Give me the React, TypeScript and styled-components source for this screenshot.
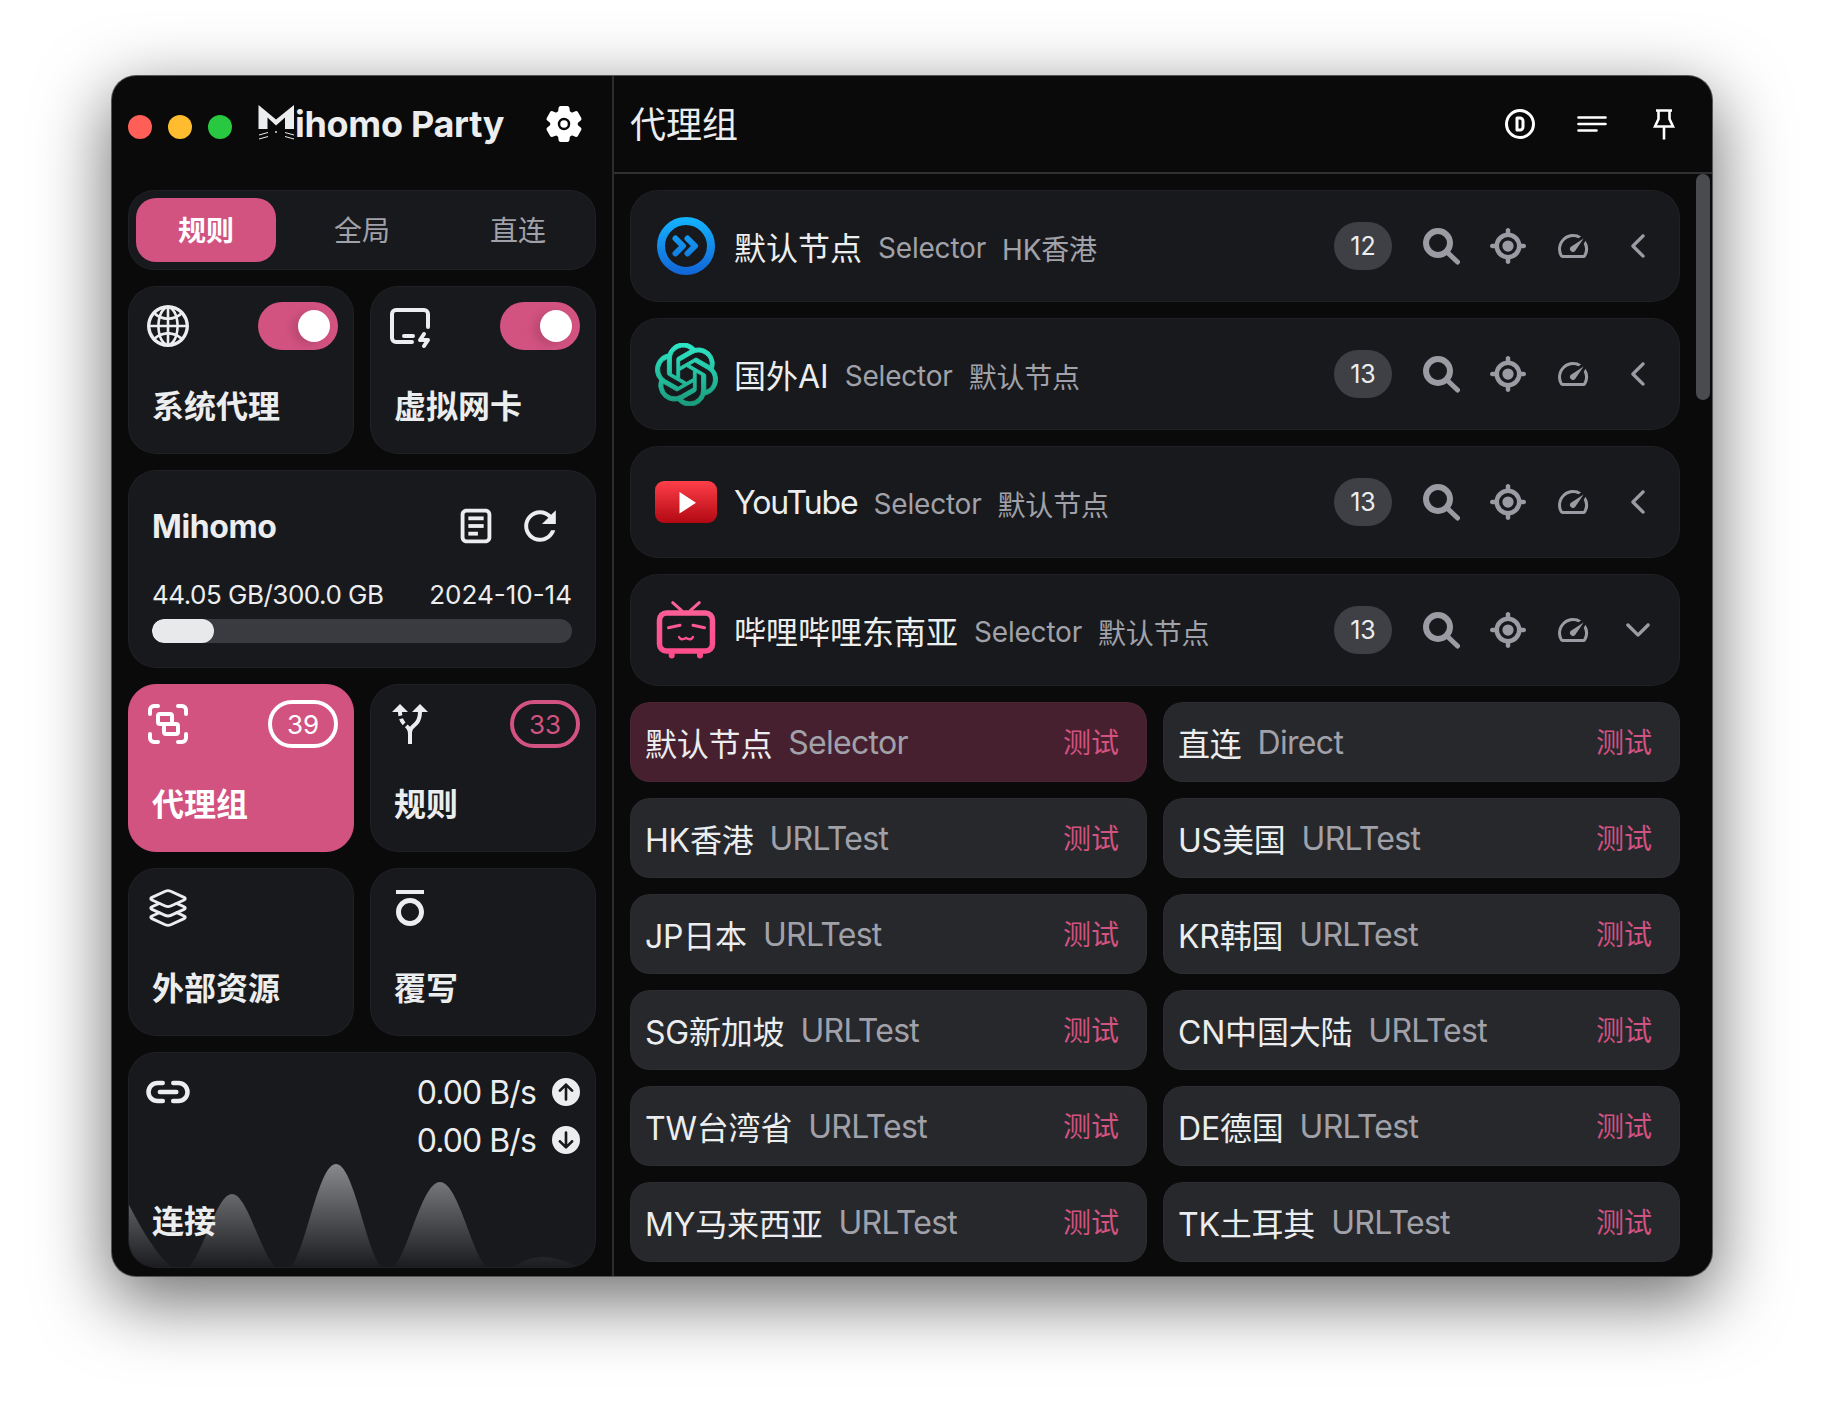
import styled, { createGlobalStyle } from 'styled-components';
import { ReactNode } from 'react';
import { IoSettings, IoLink, IoLayersOutline } from 'react-icons/io5';
import { IoMdRefresh, IoIosArrowBack, IoIosArrowDown } from 'react-icons/io';
import { AiOutlineGlobal } from 'react-icons/ai';
import { TbDeviceIpadHorizontalBolt, TbCircleLetterD } from 'react-icons/tb';
import { CgLoadbarDoc } from 'react-icons/cg';
import { LuGroup } from 'react-icons/lu';
import { MdOutlineAltRoute, MdFormatOverline, MdOutlineSpeed } from 'react-icons/md';
import { FaCircleArrowUp, FaCircleArrowDown, FaLocationCrosshairs } from 'react-icons/fa6';
import { SiOpenai } from 'react-icons/si';

const pink = '#d25280';
const text = '#ecedee';
const muted = '#a1a1aa';
const cardBg = '#18191c';

const GlobalStyle = createGlobalStyle`
	html, body {
		margin: 0;
		background: #fff;
	}
	* {
		box-sizing: border-box;
	}
	body {
		font-family: Inter, 'Noto Sans CJK SC', sans-serif;
		color: ${text};
	}
`;

const Page = styled.div`
	width: 1824px;
	height: 1424px;
	padding: 76px 112px 148px;
	overflow: hidden;
`;

const Window = styled.div`
	width: 1600px;
	height: 1200px;
	display: flex;
	background: #0a0a0b;
	border-radius: 24px;
	overflow: hidden;
	box-shadow: 0 0 0 1px #55565a, 0 22px 70px 4px rgba(0, 0, 0, 0.56);
`;

const Sidebar = styled.aside`
	width: 502px;
	flex-shrink: 0;
	border-right: 2px solid #2b2c2e;
`;

const SideHeader = styled.div`
	height: 98px;
	padding: 0 16px;
	display: flex;
	align-items: center;
`;

const Lights = styled.div`
	display: flex;
	gap: 16px;
	margin-top: 4px;
`;

const Light = styled.span<{ $color: string }>`
	width: 24px;
	height: 24px;
	border-radius: 50%;
	background: ${(p) => p.$color};
`;

const Brand = styled.div`
	display: flex;
	align-items: flex-start;
	margin-left: 26px;
	flex-grow: 1;
`;

const BrandName = styled.span`
	font-size: 36px;
	font-weight: 700;
	line-height: 44px;
	letter-spacing: -0.3px;
	margin-top: -2px;
`;

const GearButton = styled.span`
	width: 64px;
	margin-top: -2px;
	display: flex;
	justify-content: center;
	color: #fff;
`;

const SideBody = styled.div`
	padding: 16px 16px 0;
	display: grid;
	grid-template-columns: 226px 226px;
	gap: 16px;
`;

const Card = styled.div`
	background: ${cardBg};
	border: 1px solid rgba(255, 255, 255, 0.035);
	border-radius: 28px;
`;

const Tabs = styled(Card)`
	grid-column: 1 / 3;
	height: 80px;
	padding: 7px;
	display: flex;
	gap: 16px;
	border-radius: 26px;
`;

const Tab = styled.div<{ $active?: boolean }>`
	width: 140px;
	height: 64px;
	padding-bottom: 2px;
	border-radius: 20px;
	display: flex;
	align-items: center;
	justify-content: center;
	font-size: 28px;
	font-weight: ${(p) => (p.$active ? 700 : 400)};
	color: ${(p) => (p.$active ? '#fff' : muted)};
	background: ${(p) => (p.$active ? pink : 'transparent')};
`;

const NavCard = styled(Card)<{ $active?: boolean }>`
	height: 168px;
	display: flex;
	flex-direction: column;
	justify-content: space-between;
	padding: 15px 15px 22px 0;
	background: ${(p) => (p.$active ? pink : cardBg)};
	color: ${(p) => (p.$active ? '#fff' : text)};
	border-color: ${(p) => (p.$active ? pink : 'rgba(255, 255, 255, 0.035)')};
`;

const NavTop = styled.div`
	display: flex;
	align-items: center;
	justify-content: space-between;
	height: 48px;
`;

const NavIcon = styled.span`
	width: 48px;
	height: 48px;
	margin-left: 15px;
	display: flex;
	align-items: center;
	justify-content: center;
`;

const NavLabel = styled.div`
	font-size: 32px;
	font-weight: 700;
	line-height: 48px;
	padding-left: 23px;
`;

const Toggle = styled.span`
	width: 80px;
	height: 48px;
	border-radius: 24px;
	background: ${pink};
	padding: 8px;
	display: flex;
	justify-content: flex-end;
`;

const Knob = styled.span`
	width: 32px;
	height: 32px;
	border-radius: 50%;
	background: #fff;
	box-shadow: -6px 3px 10px rgba(0, 0, 0, 0.12);
`;

const CountBadge = styled.span<{ $active?: boolean }>`
	width: 70px;
	height: 48px;
	border-radius: 24px;
	border: 4px solid ${(p) => (p.$active ? '#fff' : pink)};
	color: ${(p) => (p.$active ? '#fff' : pink)};
	font-size: 26px;
	display: flex;
	align-items: center;
	justify-content: center;
`;

const CoreCard = styled(Card)`
	grid-column: 1 / 3;
	height: 198px;
	padding: 0 23px;
`;

const CoreTop = styled.div`
	height: 112px;
	display: flex;
	align-items: center;
	padding-bottom: 2px;
`;

const CoreTitle = styled.div`
	font-size: 32px;
	font-weight: 700;
	letter-spacing: -0.4px;
	flex-grow: 1;
`;

const CoreButton = styled.span`
	width: 64px;
	display: flex;
	justify-content: center;
`;

const CoreInfo = styled.div`
	display: flex;
	justify-content: space-between;
	font-size: 26px;
	line-height: 32px;
	margin-top: -4px;
`;

const CoreUsage = styled.span`
	letter-spacing: -0.5px;
`;

const Track = styled.div`
	height: 24px;
	margin-top: 8px;
	background: #3a3b40;
	border-radius: 12px;
	overflow: hidden;
`;

const TrackFill = styled.div`
	height: 100%;
	background: #e8e9eb;
	border-radius: 12px;
`;

const ConnCard = styled(Card)`
	grid-column: 1 / 3;
	height: 216px;
	position: relative;
	overflow: hidden;
	padding: 15px 15px 0 0;
`;

const ConnTop = styled.div`
	display: flex;
	justify-content: space-between;
	position: relative;
`;

const Speeds = styled.div`
	display: flex;
	flex-direction: column;
`;

const SpeedRow = styled.div`
	display: flex;
	align-items: center;
	justify-content: flex-end;
	gap: 16px;
	height: 48px;
	font-size: 32px;
	letter-spacing: -0.9px;
`;

const ConnChart = styled.svg`
	position: absolute;
	left: -1px;
	bottom: -1px;
`;

const ConnLabel = styled(NavLabel)`
	position: absolute;
	bottom: 21px;
	left: 0;
`;

const Main = styled.main`
	flex-grow: 1;
	min-width: 0;
	position: relative;
`;

const MainHeader = styled.header`
	height: 98px;
	padding: 0 16px;
	display: flex;
	align-items: center;
	border-bottom: 2px solid #2f3032;
`;

const MainTitle = styled.h1`
	margin: -4px 0 0;
	flex-grow: 1;
	font-size: 36px;
	font-weight: 400;
`;

const HeaderButtons = styled.div`
	display: flex;
	align-items: center;
	margin-right: -4px;
`;

const HeaderButton = styled.span`
	width: 72px;
	display: flex;
	align-items: center;
	justify-content: center;
	color: #fff;
`;

const Content = styled.div`
	padding: 16px 32px 0 16px;
	display: flex;
	flex-direction: column;
	gap: 16px;
`;

const GroupCard = styled(Card)`
	height: 112px;
	padding: 0 9px 0 23px;
	display: flex;
	align-items: center;
`;

const GroupIcon = styled.span`
	width: 64px;
	height: 64px;
	margin-right: 16px;
	display: flex;
	align-items: center;
	justify-content: center;
	flex-shrink: 0;
`;

const GroupName = styled.span<{ $tight?: boolean }>`
	font-size: 32px;
	letter-spacing: ${(p) => (p.$tight ? '-1.1px' : '0')};
`;

const Sub = styled.span`
	font-size: 28px;
	letter-spacing: -0.2px;
	color: ${muted};
	margin-left: 16px;
	padding-top: 3px;
`;

const CountPill = styled.span`
	margin-left: auto;
	width: 58px;
	height: 48px;
	border-radius: 24px;
	background: #3f4046;
	color: ${text};
	font-size: 25px;
	display: flex;
	align-items: center;
	justify-content: center;
	margin-right: 18px;
`;

const GroupButton = styled.span`
	width: 65px;
	display: flex;
	justify-content: center;
	color: #9a9ba3;
`;

const OpenAiIcon = styled(SiOpenai)`
	fill: url(#openaiFill);
	stroke: url(#openaiFill);
	stroke-width: 0.35px;
`;

const ProxyGrid = styled.div`
	display: grid;
	grid-template-columns: 1fr 1fr;
	gap: 16px;
`;

const ProxyItem = styled.div<{ $selected?: boolean }>`
	height: 80px;
	padding: 0 27px 0 14px;
	border-radius: 20px;
	display: flex;
	align-items: center;
	background: ${(p) => (p.$selected ? '#47202f' : '#27282c')};
	border: 1px solid rgba(255, 255, 255, 0.025);
	white-space: nowrap;
`;

const ProxyName = styled.span`
	font-size: 32px;
	letter-spacing: -0.2px;
`;

const ProxyType = styled.span`
	font-size: 32px;
	letter-spacing: -0.7px;
	color: ${muted};
	margin-left: 16px;
`;

const TestLink = styled.span`
	margin-left: auto;
	font-size: 28px;
	color: ${pink};
	padding-bottom: 3px;
`;

const ScrollThumb = styled.div`
	position: absolute;
	top: 98px;
	right: 2px;
	width: 14px;
	height: 226px;
	border-radius: 7px;
	background: #4a4b4e;
`;

const SearchIcon = () => (
	<svg width='37' height='37' viewBox='0 0 37 37' fill='none' stroke='currentColor' style={{ marginRight: 3 }}>
		<circle cx='15' cy='15' r='12' strokeWidth='6' />
		<path d='M24 24l10.5 10' strokeWidth='5' strokeLinecap='round' />
	</svg>
);

const SortLines = () => (
	<svg width='30' height='18' viewBox='0 0 30 18' stroke='#fff' strokeWidth='2.6' strokeLinecap='round'>
		<path d='M1.5 2.5h27M1.5 9h27M1.5 15.5h18' />
	</svg>
);

const PinIcon = () => (
	<svg width='22' height='31' viewBox='0 0 22 31' fill='none' stroke='#fff' strokeWidth='2.6'>
		<path d='M3 1.5h16M5.5 1.5v8.5L2 17.5h18l-3.5-7.5V1.5M11 17.5V30.5' />
	</svg>
);

const CatMark = () => (
	<svg width='37' height='37' viewBox='0 0 37 37' fill='none'>
		<path d='M0.5 1L18 15.5L36 1V25H27V13.5L18 21.5L9.5 13.5V25H0.5Z' fill={text} />
		<path d='M1 31l9-2.5M1 35l9-2.5M36 31l-9-2.5M36 35l-9-2.5' stroke={text} strokeWidth='1' />
		<circle cx='18' cy='28' r='0.9' fill={text} />
	</svg>
);

const DefaultIcon = () => (
	<svg width='64' height='64' viewBox='0 0 64 64' fill='none'>
		<defs>
			<linearGradient id='blueFill' gradientUnits='userSpaceOnUse' x1='0' y1='3' x2='0' y2='61'>
				<stop offset='0' stopColor='#14b4ff' />
				<stop offset='1' stopColor='#1164d6' />
			</linearGradient>
		</defs>
		<circle cx='32' cy='32' r='25' stroke='url(#blueFill)' strokeWidth='8' />
		<path d='M21.5 24.5l7.5 7.5-7.5 7.5M33.5 24.5l7.5 7.5-7.5 7.5' stroke='url(#blueFill)' strokeWidth='6' strokeLinecap='round' strokeLinejoin='round' />
	</svg>
);

const YouTubeIcon = () => (
	<svg width='64' height='64' viewBox='0 0 64 64'>
		<defs>
			<linearGradient id='ytFill' x1='0' y1='0' x2='0' y2='1'>
				<stop offset='0' stopColor='#ff3f49' />
				<stop offset='1' stopColor='#b20812' />
			</linearGradient>
		</defs>
		<rect x='1' y='11' width='62' height='42' rx='9' fill='url(#ytFill)' />
		<path d='M25.5 22l16.5 10.8-16.5 10.8z' fill='#fff' />
	</svg>
);

const BilibiliIcon = () => (
	<svg width='64' height='64' viewBox='0 0 64 64' fill='none'>
		<defs>
			<linearGradient id='biliFill' gradientUnits='userSpaceOnUse' x1='0' y1='4' x2='0' y2='60'>
				<stop offset='0' stopColor='#fb6297' />
				<stop offset='1' stopColor='#ff4a8a' />
			</linearGradient>
		</defs>
		<g stroke='url(#biliFill)' strokeLinecap='round'>
			<rect x='5.5' y='15' width='53' height='38' rx='7' strokeWidth='5.5' />
			<path d='M18.7 4.7l9 8M45.3 4.7l-9 8' strokeWidth='3' />
			<path d='M14.5 29.7l11.5-2.4M50.5 29.7l-11.5-2.4' strokeWidth='3' />
			<path d='M25 39q2 4 7 1q5 3 7-1' strokeWidth='2.4' />
			<path d='M17.7 56v1.5M46 56v1.5' strokeWidth='6' />
		</g>
	</svg>
);

const groups: { icon: ReactNode; name: string; now: string; count: number; open?: boolean; tight?: boolean }[] = [
	{ icon: <DefaultIcon />, name: '默认节点', now: 'HK香港', count: 12 },
	{ icon: <OpenAiIcon size={63} />, name: '国外AI', now: '默认节点', count: 13 },
	{ icon: <YouTubeIcon />, name: 'YouTube', now: '默认节点', count: 13, tight: true },
	{ icon: <BilibiliIcon />, name: '哔哩哔哩东南亚', now: '默认节点', count: 13, open: true },
];

const proxies = [
	['默认节点', 'Selector'],
	['直连', 'Direct'],
	['HK香港', 'URLTest'],
	['US美国', 'URLTest'],
	['JP日本', 'URLTest'],
	['KR韩国', 'URLTest'],
	['SG新加坡', 'URLTest'],
	['CN中国大陆', 'URLTest'],
	['TW台湾省', 'URLTest'],
	['DE德国', 'URLTest'],
	['MY马来西亚', 'URLTest'],
	['TK土耳其', 'URLTest'],
];

const App = () => {
	const used = 44.05;
	const total = 300;

	return (
		<Page>
			<GlobalStyle />
			<Window>
				<Sidebar>
					<SideHeader>
						<Lights>
							<Light $color='#ff5f57' />
							<Light $color='#febc2e' />
							<Light $color='#28c840' />
						</Lights>
						<Brand>
							<CatMark />
							<BrandName>ihomo Party</BrandName>
						</Brand>
						<GearButton>
							<IoSettings size={40} />
						</GearButton>
					</SideHeader>
					<SideBody>
						<Tabs>
							<Tab $active>规则</Tab>
							<Tab>全局</Tab>
							<Tab>直连</Tab>
						</Tabs>
						<NavCard>
							<NavTop>
								<NavIcon><AiOutlineGlobal size={48} /></NavIcon>
								<Toggle><Knob /></Toggle>
							</NavTop>
							<NavLabel>系统代理</NavLabel>
						</NavCard>
						<NavCard>
							<NavTop>
								<NavIcon><TbDeviceIpadHorizontalBolt size={48} /></NavIcon>
								<Toggle><Knob /></Toggle>
							</NavTop>
							<NavLabel>虚拟网卡</NavLabel>
						</NavCard>
						<CoreCard>
							<CoreTop>
								<CoreTitle>Mihomo</CoreTitle>
								<CoreButton><CgLoadbarDoc size={46} /></CoreButton>
								<CoreButton><IoMdRefresh size={46} /></CoreButton>
							</CoreTop>
							<CoreInfo>
								<CoreUsage>44.05 GB/300.0 GB</CoreUsage>
								<span>2024-10-14</span>
							</CoreInfo>
							<Track>
								<TrackFill style={{ width: `${(used / total) * 100}%` }} />
							</Track>
						</CoreCard>
						<NavCard $active>
							<NavTop>
								<NavIcon><LuGroup size={48} /></NavIcon>
								<CountBadge $active>39</CountBadge>
							</NavTop>
							<NavLabel>代理组</NavLabel>
						</NavCard>
						<NavCard>
							<NavTop>
								<NavIcon><MdOutlineAltRoute size={48} /></NavIcon>
								<CountBadge>33</CountBadge>
							</NavTop>
							<NavLabel>规则</NavLabel>
						</NavCard>
						<NavCard>
							<NavTop>
								<NavIcon><IoLayersOutline size={46} /></NavIcon>
							</NavTop>
							<NavLabel>外部资源</NavLabel>
						</NavCard>
						<NavCard>
							<NavTop>
								<NavIcon><MdFormatOverline size={48} /></NavIcon>
							</NavTop>
							<NavLabel>覆写</NavLabel>
						</NavCard>
						<ConnCard>
							<ConnChart width='468' height='216' viewBox='0 0 468 216'>
								<defs>
									<linearGradient id='connFill' gradientUnits='userSpaceOnUse' x1='0' y1='112' x2='0' y2='216'>
										<stop offset='0' stopColor='#88898c' />
										<stop offset='1' stopColor='#88898c' stopOpacity='0.02' />
									</linearGradient>
								</defs>
								<path
									fill='url(#connFill)'
									d='M0 151C15 180 30 205 45 216H0ZM59 216C75 205 88 142 104 142C120 142 133 205 149 216ZM162 216C178 200 190 112 208 112C226 112 238 200 254 216ZM265 216C281 200 294 130 312 130C330 130 343 200 359 216ZM382 216C396 208 405 205 415 205C428 205 440 210 452 216Z'
								/>
							</ConnChart>
							<ConnTop>
								<NavIcon><IoLink size={48} /></NavIcon>
								<Speeds>
									<SpeedRow>0.00 B/s<FaCircleArrowUp size={28} /></SpeedRow>
									<SpeedRow>0.00 B/s<FaCircleArrowDown size={28} /></SpeedRow>
								</Speeds>
							</ConnTop>
							<ConnLabel>连接</ConnLabel>
						</ConnCard>
					</SideBody>
				</Sidebar>
				<Main>
					<MainHeader>
						<MainTitle>代理组</MainTitle>
						<HeaderButtons>
							<HeaderButton><TbCircleLetterD size={36} /></HeaderButton>
							<HeaderButton><SortLines /></HeaderButton>
							<HeaderButton><PinIcon /></HeaderButton>
						</HeaderButtons>
					</MainHeader>
					<Content>
						<svg width='0' height='0' style={{ position: 'absolute' }}>
							<defs>
								<linearGradient id='openaiFill' x1='0' y1='0' x2='0' y2='1'>
									<stop offset='0' stopColor='#2ee8c8' />
									<stop offset='1' stopColor='#1a9a7a' />
								</linearGradient>
							</defs>
						</svg>
						{groups.map((group) => (
							<GroupCard key={group.name}>
								<GroupIcon>{group.icon}</GroupIcon>
								<GroupName $tight={group.tight}>{group.name}</GroupName>
								<Sub>Selector</Sub>
								<Sub>{group.now}</Sub>
								<CountPill>{group.count}</CountPill>
								<GroupButton><SearchIcon /></GroupButton>
								<GroupButton><FaLocationCrosshairs size={36} /></GroupButton>
								<GroupButton><MdOutlineSpeed size={36} /></GroupButton>
								<GroupButton>
									{group.open ? <IoIosArrowDown size={36} /> : <IoIosArrowBack size={36} />}
								</GroupButton>
							</GroupCard>
						))}
						<ProxyGrid>
							{proxies.map(([name, type]) => (
								<ProxyItem key={name} $selected={name === '默认节点'}>
									<ProxyName>{name}</ProxyName>
									<ProxyType>{type}</ProxyType>
									<TestLink>测试</TestLink>
								</ProxyItem>
							))}
						</ProxyGrid>
					</Content>
					<ScrollThumb />
				</Main>
			</Window>
		</Page>
	);
};

export default App;
